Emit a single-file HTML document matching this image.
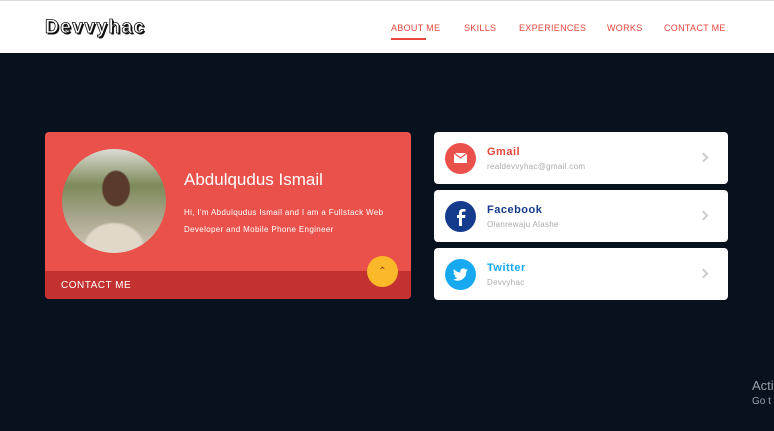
<!DOCTYPE html>
<html><head><style>
*{margin:0;padding:0;box-sizing:border-box}
body{width:774px;height:431px;background:#08121f;font-family:"Liberation Sans",sans-serif;position:relative;overflow:hidden}
.hdr{position:absolute;left:0;top:0;width:774px;height:53px;background:#fff;border-top:1px solid #ddd}
.logo{position:absolute;left:45px;top:16px;font-size:19px;font-weight:bold;letter-spacing:1.5px;color:#fff;-webkit-text-stroke:.8px #111;text-shadow:1.5px 1.5px 0 #111}
.nav a{position:absolute;top:22px;font-size:9px;color:#e8453c;letter-spacing:.3px;text-decoration:none;white-space:nowrap}
.ul{position:absolute;left:391px;top:37px;width:35px;height:2px;background:#e8453c}
.card{position:absolute;left:45px;top:132px;width:366px;height:167px;background:#ea514a;border-radius:4px;overflow:hidden}
.band{position:absolute;left:0;top:139px;width:366px;height:28px;background:#c33130;color:#fff;font-size:10px;letter-spacing:.5px;padding:9px 0 0 16px}
.photo{position:absolute;left:17px;top:17px;width:104px;height:104px;border-radius:50%;background:radial-gradient(ellipse 14% 18% at 52% 38%,#5a3a2a 0 90%,transparent 100%),radial-gradient(ellipse 30% 25% at 50% 95%,#e0d8c8 0 90%,transparent 100%),linear-gradient(180deg,#dcdcd4 0%,#7d8a5a 35%,#a8a58c 65%,#d0c8b8 100%)}
.name{position:absolute;left:139px;top:38px;color:#fff;font-size:17px}
.desc{position:absolute;left:139px;top:72px;color:#fff;font-size:8px;line-height:17px;width:225px;letter-spacing:.35px}
.up{position:absolute;left:367px;top:256px;width:31px;height:31px;border-radius:50%;background:#fbb829;color:#8a3b2a;font-size:10px;text-align:center;line-height:31px}
.s{position:absolute;left:434px;width:294px;height:52px;background:#fff;border-radius:4px}
.ic{position:absolute;left:11px;top:11px;width:31px;height:31px;border-radius:50%}
.t{position:absolute;left:53px;top:14px;font-size:11px;font-weight:bold;letter-spacing:.5px}
.sub{position:absolute;left:53px;top:30px;font-size:8px;color:#aaa;letter-spacing:.3px}
.ch{position:absolute;right:21px;top:22px;width:7px;height:7px;border-right:2px solid #ccc;border-top:2px solid #ccc;transform:rotate(45deg)}
.act{position:absolute;left:752px;top:378px;color:#9aa0a8;font-size:13px}
.go{position:absolute;left:752px;top:396px;color:#9aa0a8;font-size:10px}
</style></head><body>
<div class="hdr"><div class="logo">Devvyhac</div>
<div class="nav"><a style="left:391px">ABOUT ME</a><a style="left:464px">SKILLS</a><a style="left:519px">EXPERIENCES</a><a style="left:607px">WORKS</a><a style="left:664px">CONTACT ME</a></div>
<div class="ul"></div></div>
<div class="card"><div class="photo"></div><div class="name">Abdulqudus Ismail</div>
<div class="desc">Hi, I'm Abdulqudus Ismail and I am a Fullstack Web Developer and Mobile Phone Engineer</div>
<div class="band">CONTACT ME</div></div>
<div class="up">&#8963;</div>
<div class="s" style="top:132px"><div class="ic" style="background:#ea514a"><svg width="31" height="31"><rect x="9" y="10" width="13" height="10" fill="#fff"/><path d="M9 10l6.5 5 6.5-5" stroke="#ea514a" fill="none" stroke-width="1.2"/></svg></div><div class="t" style="color:#e8453c">Gmail</div><div class="sub">realdevvyhac@gmail.com</div><div class="ch"></div></div>
<div class="s" style="top:190px"><div class="ic" style="background:#143b8c"><svg width="31" height="31"><path d="M17 25v-8h3l.5-3H17v-2c0-1 .4-1.5 1.5-1.5H20.5V8H18c-3 0-4 1.5-4 4v2h-2v3h2v8z" fill="#fff"/></svg></div><div class="t" style="color:#143b8c">Facebook</div><div class="sub">Olanrewaju Alashe</div><div class="ch"></div></div>
<div class="s" style="top:248px"><div class="ic" style="background:#17a9f0"><svg width="31" height="31"><path d="M23 11c-.6.3-1.2.4-1.8.5.7-.4 1.1-1 1.4-1.7-.6.4-1.3.6-2 .8a3 3 0 0 0-5.2 2.8c-2.6-.1-4.9-1.4-6.4-3.300-.9 1.500-.4 3.300 1 4.100-.5 0-1-.2-1.400-.4 0 1.500 1 2.700 2.400 3-.4.1-.9.1-1.400.1.4 1.200 1.500 2 2.800 2.100A6 6 0 0 1 8 20.300 8.600 8.600 0 0 0 21.300 13v-.4c.6-.4 1.100-1 1.500-1.600z" fill="#fff"/></svg></div><div class="t" style="color:#17a9f0">Twitter</div><div class="sub">Devvyhac</div><div class="ch"></div></div>
<div class="act">Acti</div><div class="go">Go t</div>
</body></html>
